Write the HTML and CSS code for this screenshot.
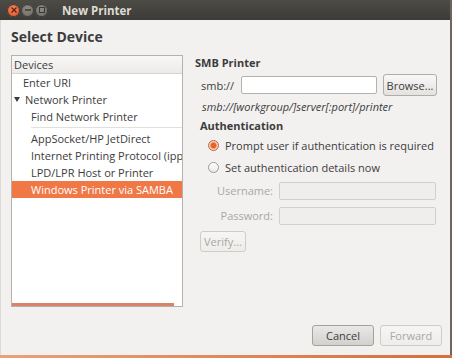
FILE: index.html
```html
<!DOCTYPE html>
<html>
<head>
<meta charset="utf-8">
<link rel="stylesheet" href="styles.css">
</head>
<body>
<div class="window">
  <div class="titlebar">
    <div class="wbtns">
      <span class="wb close"><svg width="8" height="8" viewBox="0 0 8 8"><path d="M1.5 1.5L6.5 6.5M6.5 1.5L1.5 6.5" stroke="#5a2210" stroke-width="1.3"/></svg></span>
      <span class="wb"><svg width="8" height="8" viewBox="0 0 8 8"><path d="M1 4H7" stroke="#3a3934" stroke-width="1.5"/></svg></span>
      <span class="wb"><svg width="8" height="8" viewBox="0 0 8 8"><rect x="1.5" y="1.5" width="5" height="5" fill="none" stroke="#3a3934" stroke-width="1"/></svg></span>
    </div>
    <div class="title">New Printer</div>
  </div>
  <div class="content">
    <div class="heading">Select Device</div>
    <div class="main">
      <div class="list">
        <div class="lhead">Devices</div>
        <div class="row l1">Enter URI</div>
        <div class="row l0"><span class="tri"></span>Network Printer</div>
        <div class="row l2">Find Network Printer</div>
        <div class="sep"></div>
        <div class="row l2">AppSocket/HP JetDirect</div>
        <div class="row l2">Internet Printing Protocol (ipp)</div>
        <div class="row l2">LPD/LPR Host or Printer</div>
        <div class="row l2 sel">Windows Printer via SAMBA</div>
        <div class="lfill"></div>
        <div class="hscroll"></div>
      </div>
      <div class="panel">
        <div class="sect">SMB Printer</div>
        <div class="smbrow">
          <span class="lbl">smb://</span>
          <span class="entry smb"></span>
          <span class="btn browse">Browse...</span>
        </div>
        <div class="hint">smb://[workgroup/]server[:port]/printer</div>
        <div class="sect auth">Authentication</div>
        <div class="radio"><span class="rb on"></span>Prompt user if authentication is required</div>
        <div class="radio"><span class="rb"></span>Set authentication details now</div>
        <div class="field"><span class="flbl">Username:</span><span class="entry dis"></span></div>
        <div class="field"><span class="flbl">Password:</span><span class="entry dis"></span></div>
        <div class="verify"><span class="btn dbtn">Verify...</span></div>
      </div>
    </div>
    <div class="bottom">
      <span class="btn bb">Cancel</span>
      <span class="btn bb dbtn">Forward</span>
    </div>
  </div>
</div>
<div class="desk"></div>
</body>
</html>
```

FILE: styles.css
```css
html, body { margin: 0; padding: 0; }
body {
  width: 452px; height: 358px; overflow: hidden;
  background: #d9835a;
  font-family: "Open Sans", "DejaVu Sans", sans-serif;
  font-size: 11px; color: #3c3c3c;
}
.window {
  width: 450px; height: 355px;
  background: #f2f1f0;
  border-right: 2px solid #6b6660;
  display: flex; flex-direction: column;
}
.desk { height: 3px; background: linear-gradient(90deg,#e8a27a,#d66f3c); }
.titlebar {
  height: 20px; flex: none;
  background: linear-gradient(#4d4b46, #3c3b37);
  display: flex; align-items: center;
}
.wbtns { display: flex; gap: 1px; margin-left: 7px; }
.wb {
  width: 13px; height: 13px; border-radius: 50%;
  background: radial-gradient(circle at 50% 35%, #8e8b84, #6a6761);
  display: flex; align-items: center; justify-content: center;
  box-shadow: inset 0 0 0 1px #3a3934;
}
.wb.close { background: radial-gradient(circle at 50% 35%, #f5875a, #d9501f); }
.title {
  margin-left: 14px; color: #dfdbd2; font-weight: bold; font-size: 11.5px;
}
.content {
  flex: 1; display: flex; flex-direction: column;
  padding: 0 0 0 10px;
  border-left: 1px solid #dcdad6;
}
.heading { font-weight: bold; font-size: 14px; margin-top: 7px; height: 20px; line-height: 20px; color: #3c3c3c; }
.main { display: flex; margin-top: 8px; height: 252px; }
.list {
  width: 170px; height: 250px;
  border: 1px solid #b5b2ad; background: #fff;
  display: flex; flex-direction: column; position: relative;
}
.lhead {
  height: 17px; line-height: 17px; padding-left: 2px;
  background: linear-gradient(#f7f7f6, #ecebe9);
  border-bottom: 1px solid #d6d4d0;
}
.row { height: 17px; line-height: 17px; white-space: nowrap; overflow: hidden; }
.l0 { padding-left: 2px; display: flex; align-items: center; }
.l1 { padding-left: 11px; }
.l2 { padding-left: 19px; }
.tri {
  width: 0; height: 0; margin-right: 5px;
  border-left: 3px solid transparent; border-right: 3px solid transparent;
  border-top: 5px solid #3c3c3c;
}
.sep { height: 1px; background: #e2e0dc; margin: 2px 0 2px 19px; }
.sel { background: #f07746; color: #fff; }
.lfill { flex: 1; }
.hscroll { height: 3px; background: #d9846a; margin: 0 8px 0 0; }
.panel { flex: 1; padding-left: 12px; }
.sect { font-weight: bold; height: 16px; line-height: 16px; margin-top: 0; }
.smbrow { display: flex; align-items: center; margin-top: 3px; height: 22px; padding-left: 6px; }
.lbl { width: 40px; }
.entry {
  display: block; height: 18px; box-sizing: border-box;
  border: 1px solid #b4b1ac; border-radius: 2px; background: #fff;
}
.smb { width: 136px; }
.btn {
  display: inline-flex; align-items: center; justify-content: center;
  box-sizing: border-box; border: 1px solid #b0ada8; border-radius: 3px;
  background: linear-gradient(#f8f8f7, #e4e2df);
}
.browse { width: 54px; height: 22px; margin-left: 6px; }
.hint { font-style: italic; height: 20px; line-height: 20px; padding-left: 7px; margin-top: 1px; }
.auth { margin-top: 1px; padding-left: 5px; }
.radio { display: flex; align-items: center; height: 22px; padding-left: 13px; }
.rb {
  width: 11px; height: 11px; border-radius: 50%; box-sizing: border-box;
  border: 1px solid #9e9b96; background: linear-gradient(#fff, #e9e8e6);
  margin-right: 6px;
}
.rb.on {
  border-color: #b9663f;
  background: radial-gradient(circle, #e8602a 0 2.5px, #f7c9b2 3.5px, #f3e6df 100%);
}
.field { display: flex; align-items: center; height: 25px; }
.flbl { width: 84px; text-align: right; padding-right: 6px; box-sizing: border-box; color: #a9a7a3; }
.entry.dis { width: 157px; height: 18px; background: #efeeec; border-color: #d2d0cc; }
.verify { margin-top: 3px; padding-left: 5px; }
.dbtn { color: #a9a7a3; border-color: #cfccc8; background: linear-gradient(#f6f5f4, #eeedeb); }
.verify .btn { width: 46px; height: 21px; }
.bottom { display: flex; justify-content: flex-end; gap: 6px; padding-right: 8px; margin-top: 18px; }
.bb { width: 62px; height: 21px; }
.bottom .btn:first-child { background: linear-gradient(#e9e8e6, #d3d1ce); border-color: #a5a29d; }
```
